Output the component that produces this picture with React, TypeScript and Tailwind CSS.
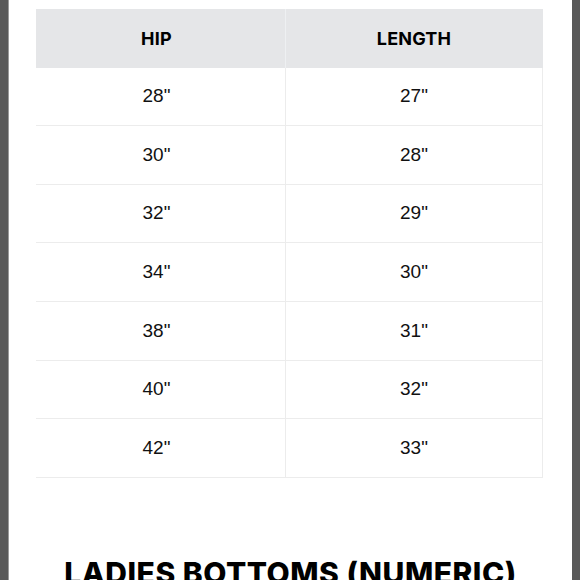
import React from 'react';

const rows = [
    { hip: '28"', length: '27"' },
    { hip: '30"', length: '28"' },
    { hip: '32"', length: '29"' },
    { hip: '34"', length: '30"' },
    { hip: '38"', length: '31"' },
    { hip: '40"', length: '32"' },
    { hip: '42"', length: '33"' },
];

export default function App() {
    return (
        <div className="flex h-[580px] w-[580px] overflow-hidden bg-[#595959]">
            <div className="ml-[8px] mr-[8px] flex flex-1 flex-col border-l border-[#9a9a9a] bg-white px-[27px] pt-[9px]">
                <div className="grid grid-cols-[250px_257px] font-['Liberation_Sans',Arial,sans-serif] text-[19px] text-[#111]">
                    <div className="flex h-[58.6px] items-center justify-center border-r border-[#eef0f2] bg-[#e5e6e8] pr-[8px] font-['Inter',sans-serif] text-[18px] font-bold tracking-[0.2px] text-black">
                        HIP
                    </div>
                    <div className="flex h-[58.6px] items-center justify-center border-r border-[#e5e6e8] bg-[#e5e6e8] font-['Inter',sans-serif] text-[18px] font-bold tracking-[0.2px] text-black">
                        LENGTH
                    </div>

                    {rows.map((row, index) => (
                        <React.Fragment key={index}>
                            <div className="flex h-[58.6px] items-center justify-center border-b border-r border-[#ececec] pr-[8px]">
                                {row.hip}
                            </div>
                            <div className="flex h-[58.6px] items-center justify-center border-b border-r border-[#ececec]">
                                {row.length}
                            </div>
                        </React.Fragment>
                    ))}
                </div>

                <h2 className="mt-[80px] whitespace-nowrap text-center font-['Inter',sans-serif] text-[30px] font-extrabold leading-none tracking-[0.5px] text-black">
                    LADIES BOTTOMS (NUMERIC)
                </h2>
            </div>
        </div>
    );
}
